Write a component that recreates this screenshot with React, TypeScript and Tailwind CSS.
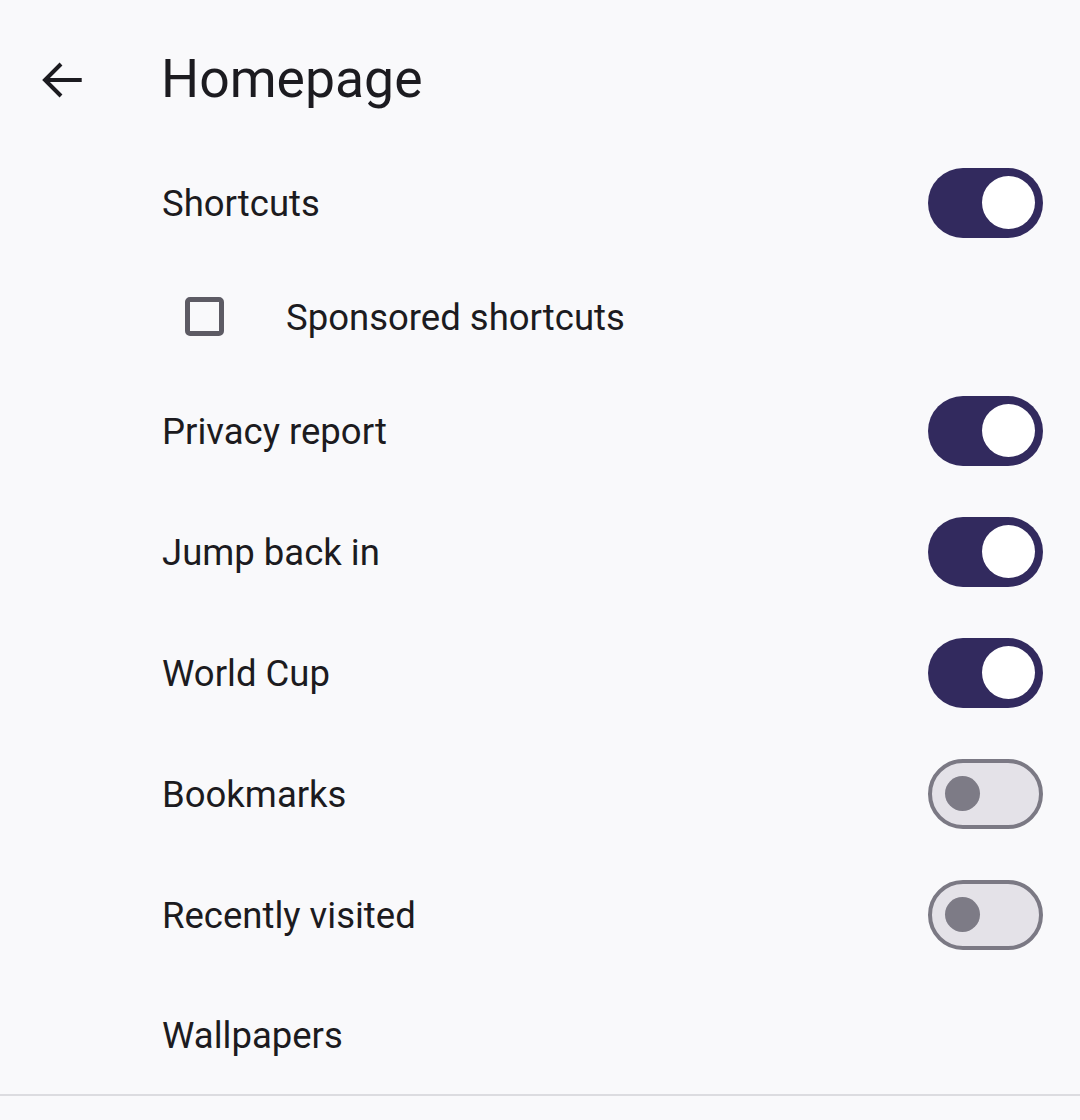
import { useState } from "react";

type Item = { label: string; on: boolean };

function Toggle({ on, onClick }: { on: boolean; onClick: () => void }) {
  return (
    <button
      type="button"
      onClick={onClick}
      className={
        on
          ? "relative flex h-[70px] w-[115px] items-center rounded-full bg-[#322a5e]"
          : "relative flex h-[70px] w-[115px] items-center rounded-full border-[4px] border-[#7b7984] bg-[#e4e2e8]"
      }
    >
      {on ? (
        <span className="absolute left-[54px] h-[53px] w-[53px] rounded-full bg-white" />
      ) : (
        <span className="absolute left-[13px] h-[35px] w-[35px] rounded-full bg-[#7d7b86]" />
      )}
    </button>
  );
}

export default function App() {
  const [items, setItems] = useState<Item[]>([
    { label: "Privacy report", on: true },
    { label: "Jump back in", on: true },
    { label: "World Cup", on: true },
    { label: "Bookmarks", on: false },
    { label: "Recently visited", on: false },
  ]);
  const [shortcuts, setShortcuts] = useState(true);
  const [sponsored, setSponsored] = useState(false);

  const flip = (i: number) =>
    setItems(items.map((it, j) => (j === i ? { ...it, on: !it.on } : it)));

  return (
    <div className="min-h-[1120px] w-[1080px] bg-[#f9f9fb] text-[#1c1b20] font-['Roboto',sans-serif]">
      {/* top bar */}
      <div className="flex h-[142px] items-start">
        <div className="mt-[60px] ml-[40px] h-[40px] w-[44px]">
          <svg viewBox="0 0 44 40" className="h-[40px] w-[44px]" fill="none" stroke="#1c1b20" strokeWidth="4">
            <path d="M5 20H41.7" />
            <path d="M21 4L5 20L21 36" />
          </svg>
        </div>
        <h1 className="mt-[47px] ml-[77px] text-[53.5px] leading-[64px]">Homepage</h1>
      </div>

      <div className="flex h-[121px] items-center justify-between pl-[162px] pr-[37px]">
        <span className="pt-[3px] text-[36.5px]">Shortcuts</span>
        <Toggle on={shortcuts} onClick={() => setShortcuts(!shortcuts)} />
      </div>

      <div className="flex h-[107px] items-center pl-[185px]">
        <button
          type="button"
          onClick={() => setSponsored(!sponsored)}
          className="h-[39px] w-[39px] rounded-[5px] border-[5px] border-[#5d5b64]"
        />
        <span className="ml-[62px] pt-[3px] text-[36.5px]">Sponsored shortcuts</span>
      </div>

      {items.map((it, i) => (
        <div
          key={it.label}
          className="flex h-[121px] items-center justify-between pl-[162px] pr-[37px]"
        >
          <span className="pt-[3px] text-[36.5px]">{it.label}</span>
          <Toggle on={it.on} onClick={() => flip(i)} />
        </div>
      ))}

      <div className="flex h-[121px] items-center pl-[162px] border-b-2 border-[#dcdce0]">
        <span className="pt-[3px] text-[36.5px]">Wallpapers</span>
      </div>
    </div>
  );
}
